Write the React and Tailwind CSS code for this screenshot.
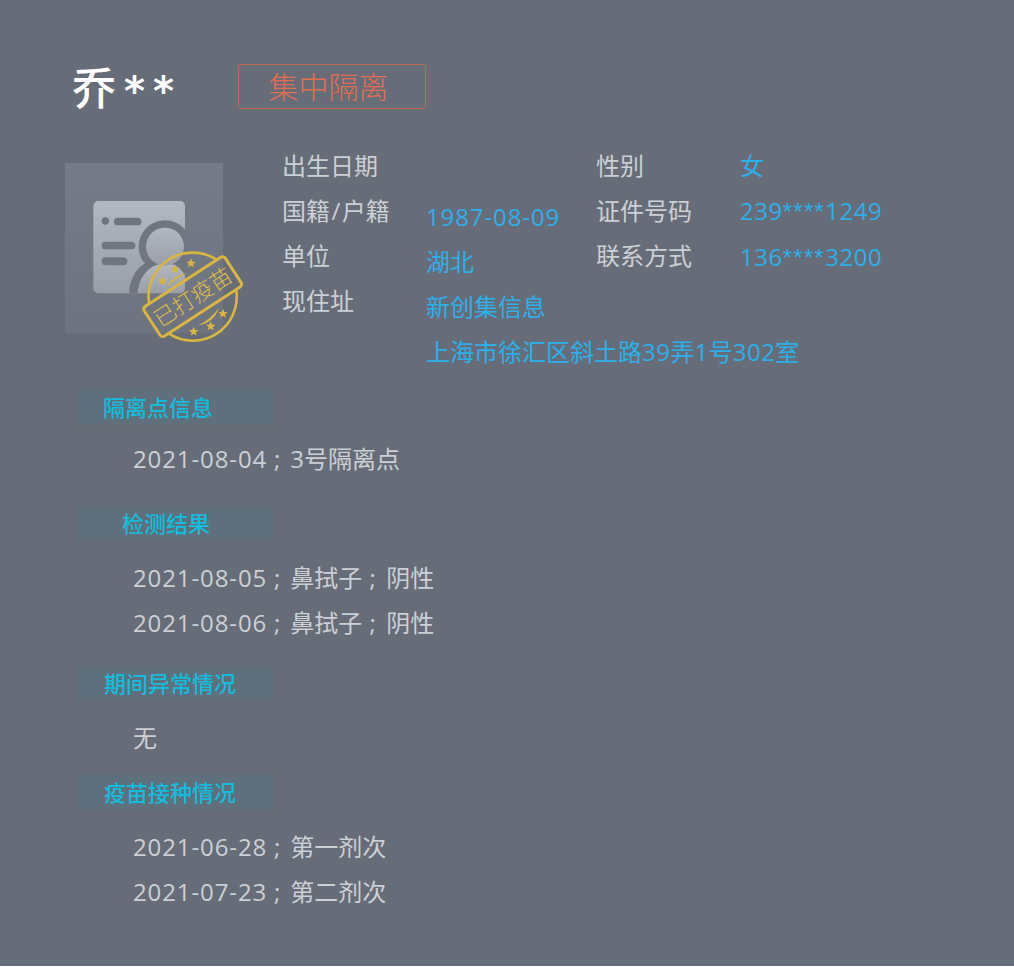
const cjk = "font-['Open_Sans','Noto_Sans_CJK_SC',sans-serif]";

const sections = [
  { title: "隔离点信息", top: "mt-[15px]", pad: "pl-[26px]", listTop: "mt-[11px]", lines: [["2021-08-04", "", "3号隔离点"]] },
  { title: "检测结果", top: "mt-[24px]", pad: "pl-[45px]", listTop: "mt-[14px]", lines: [["2021-08-05", "", "鼻拭子", "阴性"], ["2021-08-06", "", "鼻拭子", "阴性"]] },
  { title: "期间异常情况", top: "mt-[20px]", pad: "pl-[27px]", listTop: "mt-[14px]", lines: [["无"]] },
  { title: "疫苗接种情况", top: "mt-[14px]", pad: "pl-[27px]", listTop: "mt-[14px]", lines: [["2021-06-28", "", "第一剂次"], ["2021-07-23", "", "第二剂次"]] },
];

function Masked({ head, tail }) {
  return (
    <div>
      <span className="tracking-[0.5px]">{head}</span>
      <span className="font-['Liberation_Sans',sans-serif] tracking-[1.3px]">****</span>
      <span className="tracking-[0.5px]">{tail}</span>
    </div>
  );
}

// date ; item ; item, the semicolon takes a full CJK cell
function DetailLine({ parts }) {
  if (parts.length === 1) return <div>{parts[0]}</div>;
  const [date, , first, second] = parts;
  return (
    <div>
      <span className="tracking-[0.9px]">{date}</span>
      <span className="inline-block w-[23px] text-center pr-[3px]">;</span>
      {first}
      {second && <span className="inline-block w-[24px] text-center pr-[3px]">;</span>}
      {second}
    </div>
  );
}

function Avatar() {
  const stars = [[322, 378], [360, 342], [408, 325], [504, 476], [467, 514], [416, 530]];
  return (
    <div className="relative w-[158px] h-[170px] mt-[20px] bg-gradient-to-b from-[#757b87] to-[#6d737f] shrink-0">
      <svg className="absolute left-[-10px] top-[-8px] w-[200px] h-[200px]" viewBox="0 0 600 600">
        <defs>
          <linearGradient id="card" x1="0" y1="0" x2="0" y2="1">
            <stop offset="0" stopColor="#b3b7c0" />
            <stop offset="1" stopColor="#9a9ea9" />
          </linearGradient>
          <clipPath id="cardClip">
            <rect x="115" y="138" width="275" height="277" rx="15" />
          </clipPath>
        </defs>
        <rect x="115" y="138" width="275" height="277" rx="15" fill="url(#card)" />
        <circle cx="151" cy="198" r="11" fill="#6f7581" />
        <rect x="177" y="188" width="82" height="23" rx="11" fill="#6f7581" />
        <rect x="140" y="260" width="101" height="23" rx="11" fill="#6f7581" />
        <rect x="140" y="307" width="77" height="24" rx="12" fill="#6f7581" />
        <g clipPath="url(#cardClip)">
          <circle cx="330" cy="275" r="79" fill="#6f7581" />
          <path d="M222 415 C224 365 250 330 290 315 L400 315 L400 415 Z" fill="#6f7581" />
          <path d="M248 415 C250 370 275 340 310 328 L352 328 C385 340 400 370 400 415 Z" fill="url(#card)" />
          <circle cx="330" cy="275" r="57" fill="url(#card)" />
        </g>
        <g stroke="#d9b63f" fill="none">
          <path d="M282.6 446.4 A132 132 0 0 1 485.6 314.6" strokeWidth="8" />
          <path d="M543.4 403.6 A132 132 0 0 1 340.4 535.4" strokeWidth="8" />
          <rect x="268" y="372" width="290" height="106" rx="10" strokeWidth="9" transform="rotate(-33 413 425)" />
        </g>
        <path d="M336 396 Q350 362 398 354 Q362 368 336 396 Z" fill="#d9b63f" />
        <path d="M430 511 Q478 502 492 458 Q470 490 430 511 Z" fill="#d9b63f" />
        {stars.map(([x, y]) => (
          <path
            key={`${x}-${y}`}
            transform={`translate(${x} ${y}) scale(1.5)`}
            d="M0 -10 L2.9 -3.1 L9.5 -3.1 L4.2 1.2 L5.9 8 L0 4.3 L-5.9 8 L-4.2 1.2 L-9.5 -3.1 L-2.9 -3.1 Z"
            fill="#d9b63f"
          />
        ))}
        <text
          x="413"
          y="450"
          textAnchor="middle"
          transform="rotate(-33 413 425)"
          fontSize="66"
          fontWeight="300"
          fill="#e0bd45"
          fontFamily="'Noto Sans CJK SC', sans-serif"
        >
          已打疫苗
        </text>
      </svg>
    </div>
  );
}

export default function App() {
  return (
    <div className={`h-[966px] overflow-hidden bg-[#666d78] text-[24px] leading-[45px] text-[#ccd0d5] ${cjk}`}>
      <div className="flex items-center pt-[64px] pl-[72px] h-[108px]">
        <div className="w-[166px] flex items-center text-white font-['Noto_Sans_CJK_SC',sans-serif] leading-[44px]">
          <span className="text-[44px] font-medium">乔</span>
          <span className="ml-[8px] text-[40px] font-bold tracking-[8px] font-['DejaVu_Sans',sans-serif] mt-[10px]">**</span>
        </div>
        <div className="w-[188px] h-[45px] pr-[7px] flex items-center justify-center border border-[#c5654f] rounded-[3px] text-[30px] text-[#e26d52] font-light">
          集中隔离
        </div>
      </div>

      <div className="flex pl-[65px] mt-[35px] h-[231px]">
        <Avatar />
        <div className="ml-[59px] w-[144px] shrink-0">
          <div>出生日期</div>
          <div>
            国籍<span className="px-[1.5px]">/</span>户籍
          </div>
          <div>单位</div>
          <div>现住址</div>
        </div>
        <div className="w-[170px] shrink-0 pt-[51px] whitespace-nowrap text-[#2bb0ec]">
          <div className="tracking-[0.9px]">1987-08-09</div>
          <div>湖北</div>
          <div>新创集信息</div>
          <div>
            上海市徐汇区斜土路
            <span className="tracking-[0.5px]">39</span>弄
            <span className="tracking-[0.5px]">1</span>号
            <span className="tracking-[0.5px]">302</span>室
          </div>
        </div>
        <div className="w-[144px] shrink-0">
          <div>性别</div>
          <div>证件号码</div>
          <div>联系方式</div>
        </div>
        <div className="text-[#2bb0ec] whitespace-nowrap">
          <div>女</div>
          <Masked head="239" tail="1249" />
          <Masked head="136" tail="3200" />
        </div>
      </div>

      {sections.map((s) => (
        <section key={s.title} className={s.top}>
          <div className={`ml-[76px] w-[198px] h-[36px] flex items-center bg-[#5f707c] border border-[#646e76] text-[22px] text-[#13bcdc] font-medium ${s.pad}`}>
            {s.title}
          </div>
          <div className={`${s.listTop} pl-[133px]`}>
            {s.lines.map((parts) => (
              <DetailLine key={parts.join("-")} parts={parts} />
            ))}
          </div>
        </section>
      ))}
    </div>
  );
}
